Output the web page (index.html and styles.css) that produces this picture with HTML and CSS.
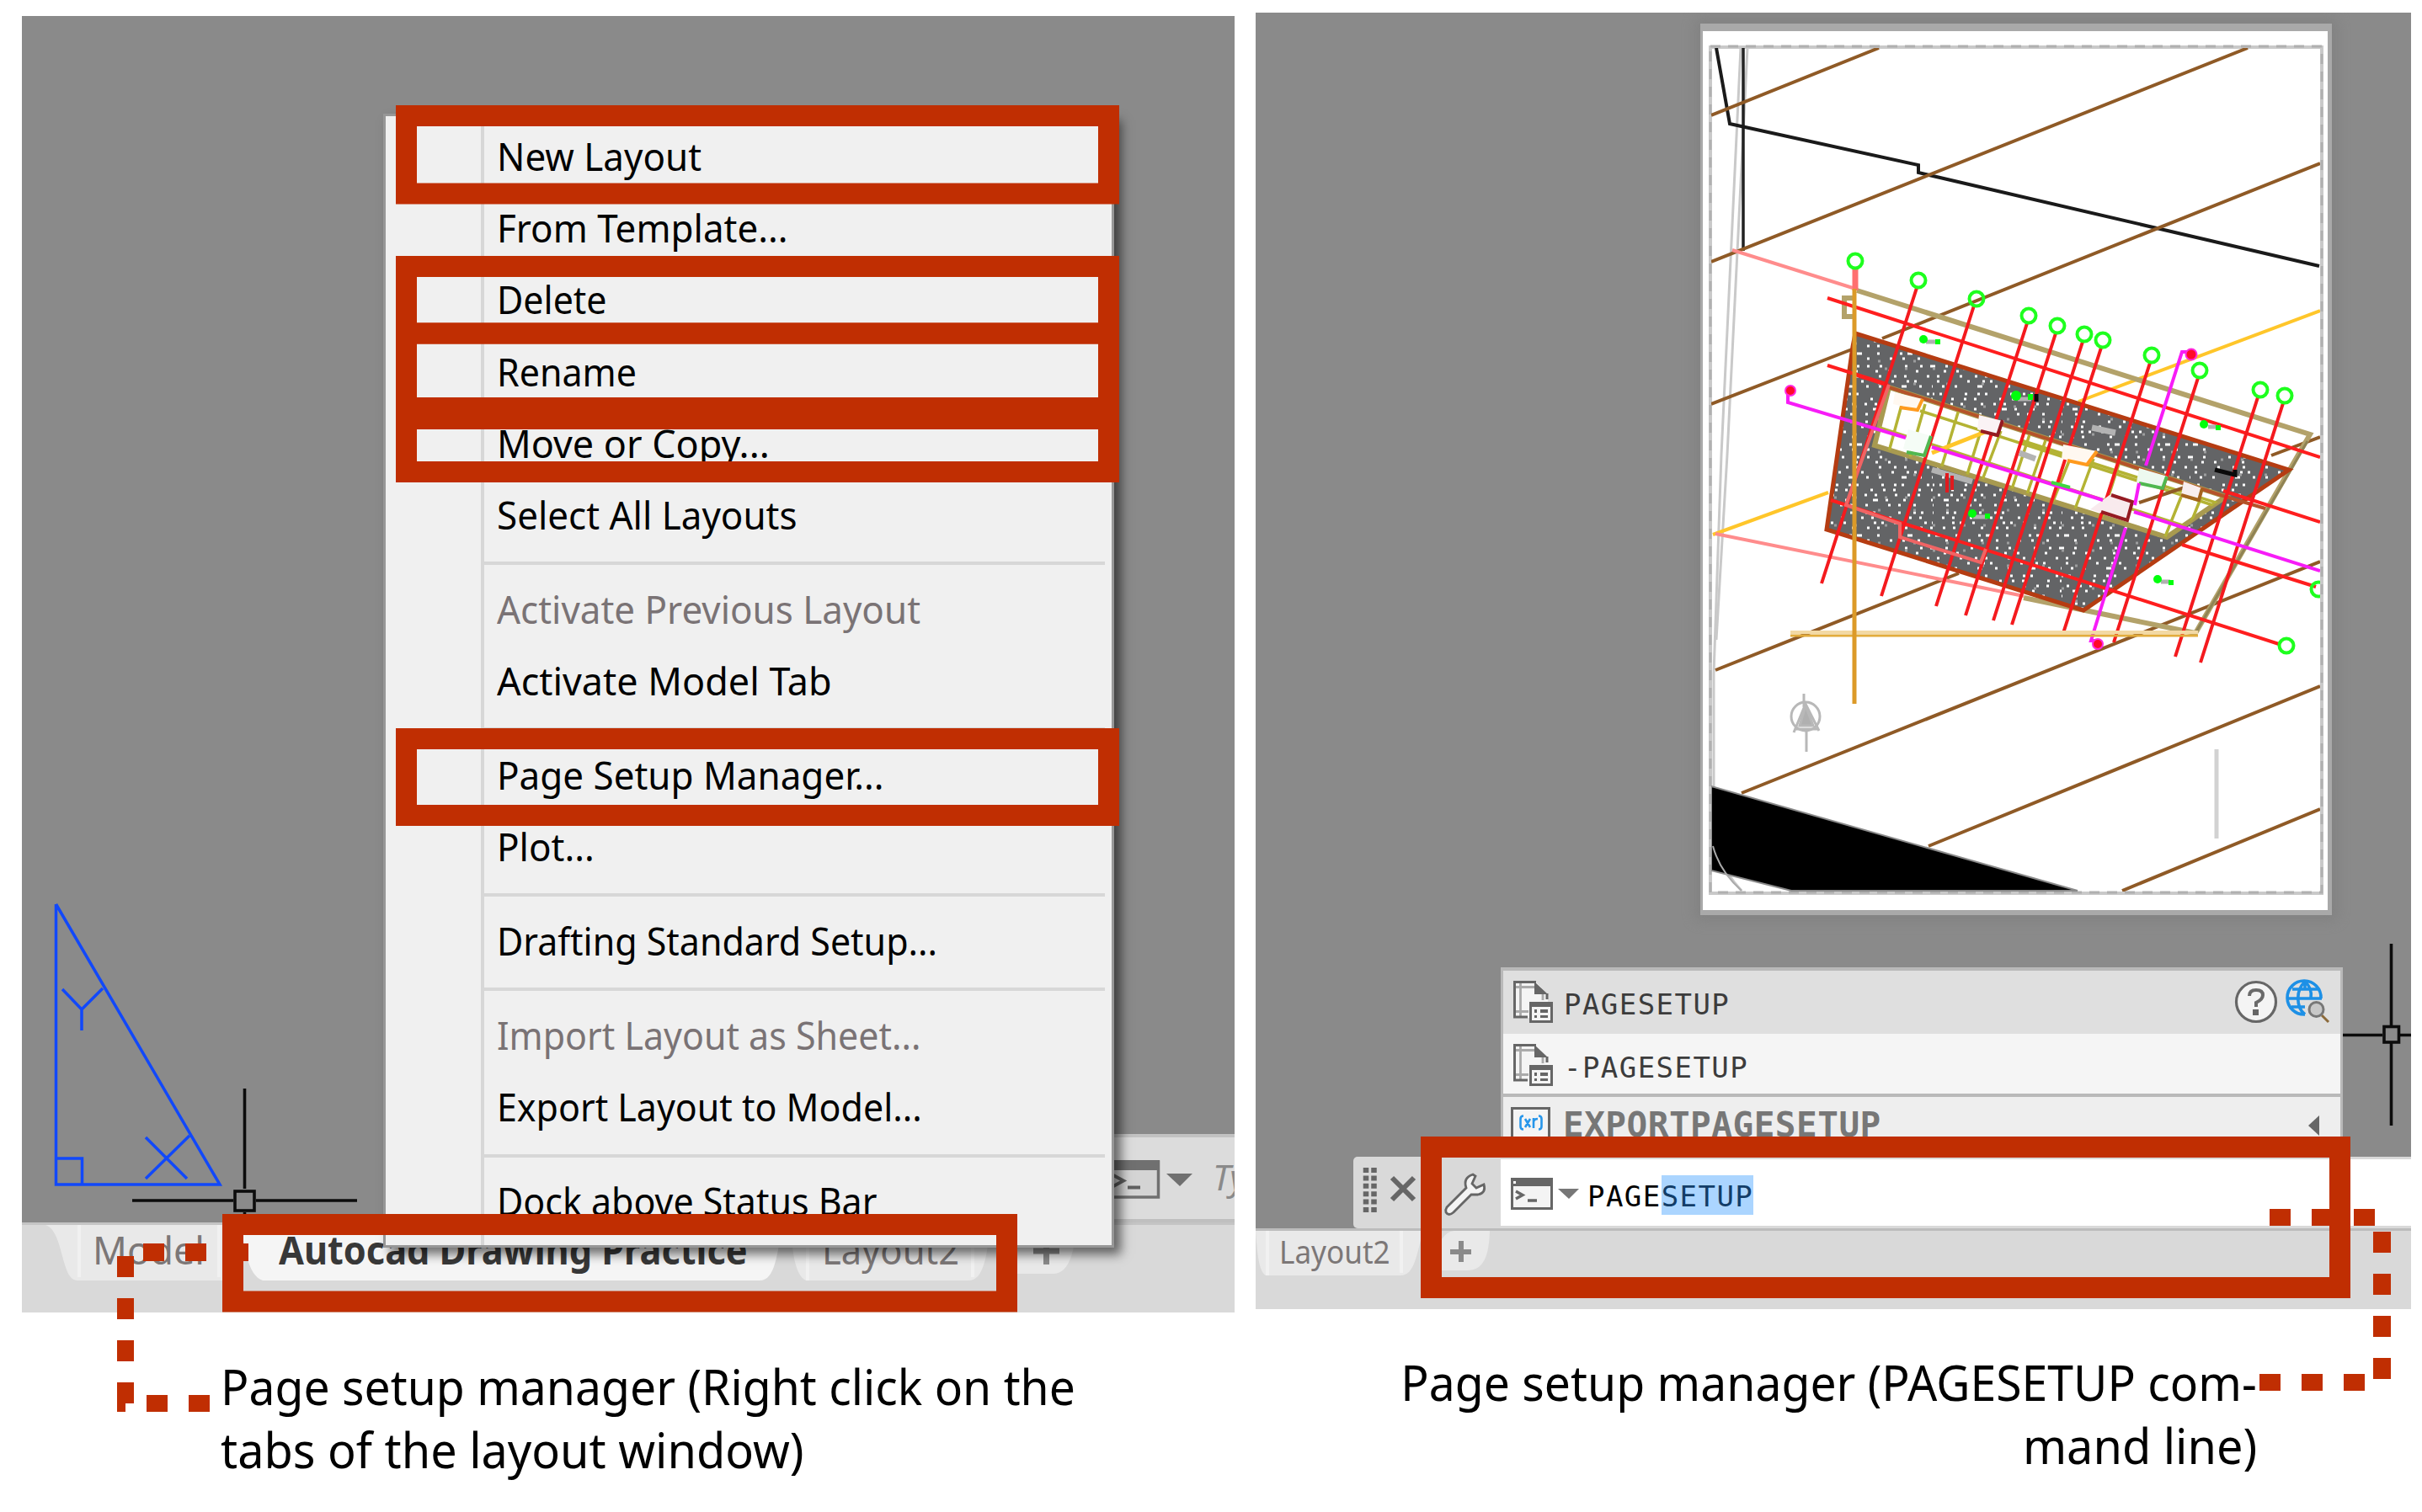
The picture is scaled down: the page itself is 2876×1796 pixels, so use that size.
FILE: index.html
```html
<!DOCTYPE html>
<html lang="en">
<head>
<meta charset="utf-8">
<title>Page setup manager</title>
<link rel="stylesheet" href="styles.css">
</head>
<body>
<main class="sheet">
  <figure class="figure figure-left">
    <div class="panel">
      <div class="canvas canvas-left">
        <svg class="layer" width="1440" height="1433" viewBox="26 19 1440 1433">
          <g class="ucs">
            <path d="M66.5 1074V1407H261L66.5 1074M66.5 1376H97.5V1407"/>
            <path d="M74 1175L97 1199L122 1174M97 1199V1224M173 1351L222 1400M173 1400L225 1349"/>
          </g>
          <g class="cross"><path d="M290.500 1293V1412M290.500 1440V1452M157 1426H277M304 1426H424"/><rect x="279" y="1415" width="23" height="23"/></g>
        </svg>
        <div class="cmd-strip">
          <svg width="143" height="97" viewBox="1323 1351 143 97">
            <rect x="1300" y="1380" width="75.500" height="42" fill="#d4d4d4" stroke="#707070" stroke-width="3.500"/>
            <path d="M1300 1378H1377V1390H1300z" fill="#707070"/>
            <path d="M1322 1396L1334 1402.500L1322 1409M1339 1410.500H1354" fill="none" stroke="#606060" stroke-width="4"/>
            <path d="M1385 1394H1416L1401 1409z" fill="#707070"/>
          </svg>
          <span class="hint">Type a command</span>
        </div>
      </div>
      <div class="tabbar tabbar-left">
        <svg class="layer" width="1440" height="107" viewBox="26 1452 1440 107">
          <path class="tab" d="M54 1455H264V1521H92C72 1521 76 1462 54 1455z"/>
          <path class="tab-edge" d="M94 1455V1517M260 1455V1517"/>
          <path class="tab" d="M939 1455H1176C1172 1492 1168 1521 1150 1521H957C943 1515 940 1480 939 1455z"/>
          <path class="tab-edge" d="M959 1455V1521M1155 1455V1517"/>
          <path class="tab" d="M1190 1455H1279C1275 1492 1268 1513 1250 1513H1190z"/>
          <path class="tab-on" d="M270 1455H930C922 1490 921 1521 902 1521H312C294 1515 290 1480 286 1455z"/>
          <path d="M1227 1486H1258M1242.500 1470V1502" stroke="#8a8a8a" stroke-width="7"/>
        </svg>
        <span class="tab-label l-model">Model</span>
        <span class="tab-label l-active">Autocad Drawing Practice</span>
        <span class="tab-label l-layout">Layout2</span>
      </div>
      <div class="menu">
        <div class="item"><span>New Layout</span></div>
        <div class="item"><span>From Template...</span></div>
        <div class="item snug"><span>Delete</span></div>
        <div class="item snug"><span>Rename</span></div>
        <div class="item wide"><span>Move or Copy...</span></div>
        <div class="item"><span>Select All Layouts</span></div>
        <div class="sep"></div>
        <div class="item off"><span>Activate Previous Layout</span></div>
        <div class="item wide"><span>Activate Model Tab</span></div>
        <div class="sep"></div>
        <div class="item"><span>Page Setup Manager...</span></div>
        <div class="item"><span>Plot...</span></div>
        <div class="sep"></div>
        <div class="item snug"><span>Drafting Standard Setup...</span></div>
        <div class="sep"></div>
        <div class="item snug off"><span>Import Layout as Sheet...</span></div>
        <div class="item snug"><span>Export Layout to Model...</span></div>
        <div class="sep"></div>
        <div class="item snug"><span>Dock above Status Bar</span></div>
      </div>
    </div>
    <figcaption class="caption caption-left"><span>Page setup manager (Right click on the</span><span>tabs of the layout window)</span></figcaption>
  </figure>

  <figure class="figure figure-right">
    <div class="panel">
      <div class="canvas canvas-right">
        <div class="paper"></div>
        <svg class="layer" width="1372" height="1444" viewBox="1491 15 1372 1444">
          <defs>
            <clipPath id="view"><rect x="2032" y="57" width="723" height="1002"/></clipPath>
            <clipPath id="court"><path d="M2243 460L2643 590L2573 638L2226 529z"/></clipPath>
            <pattern id="speck" width="153" height="108" patternUnits="userSpaceOnUse">
              <rect width="153" height="108" fill="#636466"/>
              <g fill="none" stroke="#fff" stroke-width="3">
                <path d="M0 3H153" stroke-dasharray="3 12 3 27 3 15 3 9"/>
                <path d="M0 9H153" stroke-dasharray="3 21 3 12 3 30" stroke-dashoffset="11"/>
                <path d="M0 15H153" stroke-dasharray="3 15 3 9 3 24" stroke-dashoffset="25"/>
                <path d="M0 21H153" stroke-dasharray="3 6 3 33 3 15" stroke-dashoffset="4"/>
                <path d="M0 27H153" stroke-dasharray="3 24 6 15 3 12" stroke-dashoffset="37"/>
                <path d="M0 36H153" stroke-dasharray="3 12 3 6 3 27" stroke-dashoffset="16"/>
                <path d="M0 42H153" stroke-dasharray="3 27 3 12 3 9" stroke-dashoffset="8"/>
                <path d="M0 48H153" stroke-dasharray="3 9 3 21 3 12" stroke-dashoffset="30"/>
                <path d="M0 54H153" stroke-dasharray="3 30 6 9 3 18" stroke-dashoffset="20"/>
                <path d="M0 60H153" stroke-dasharray="3 15 3 24 3 9" stroke-dashoffset="2"/>
                <path d="M0 69H153" stroke-dasharray="3 6 3 27 3 15" stroke-dashoffset="41"/>
                <path d="M0 75H153" stroke-dasharray="3 21 3 9 3 18" stroke-dashoffset="13"/>
                <path d="M0 81H153" stroke-dasharray="3 12 3 33 3 6" stroke-dashoffset="28"/>
                <path d="M0 87H153" stroke-dasharray="3 15 3 9 3 30" stroke-dashoffset="6"/>
                <path d="M0 96H153" stroke-dasharray="3 24 3 6 6 18" stroke-dashoffset="33"/>
                <path d="M0 102H153" stroke-dasharray="3 12 3 15 3 24" stroke-dashoffset="18"/>
              </g>
              <g fill="none" stroke="#9c9d9e" stroke-width="3">
                <path d="M0 6H153M0 51H153M0 84H153" stroke-dasharray="3 33 3 21"/>
                <path d="M0 24H153M0 66H153M0 105H153" stroke-dasharray="3 27 3 39" stroke-dashoffset="14"/>
              </g>
            </pattern>
          </defs>
          <rect x="2031" y="56" width="726" height="1005" class="vp-edge"/>
          <rect x="2031" y="55" width="726" height="1005" class="vp-dash"/>
          <g clip-path="url(#view)" fill="none">
            <g stroke="#c9c9c9" stroke-width="3"><path d="M2067 57L2044 540L2035 800V1000Q2042 1030 2068 1058"/><path d="M2075 57L2051 540L2038 760"/></g>
            <path d="M2070 57V298" stroke="#222" stroke-width="3.500"/>
            <path d="M2038 57L2054 147L2278 196V205L2754 316" stroke="#1a1a1a" stroke-width="4"/>
            <g stroke="#8f5a26" stroke-width="4">
              <path d="M2032 137L2231 57M2032 311L2669 57M2032 480L2199 415M2235 402L2755 194M2037 796L2326 681M2755 519L2697 541M2068 942L2755 667M2290 1005L2755 815M2520 1058L2755 961"/>
            </g>
            <path d="M2755 369L2468 477M2034 635L2171 585" stroke="#ffc62a" stroke-width="4"/>
            <path d="M2057 297L2200 342M2037 634L2403 708" stroke="#ff8c8c" stroke-width="4"/>
            <path d="M2205 345L2743 516L2607 752L2403 710M2203 354H2190V376H2203" stroke="#b3a26a" stroke-width="6"/>
            <path d="M2740 524L2607 752" stroke="#8f8354" stroke-width="3"/>
            <path d="M2032 934L2467 1058H2127L2032 1034z" fill="#000" stroke="#8a8a8a" stroke-width="2"/>
            <path d="M2034 1005Q2042 1035 2068 1058" stroke="#aaa" stroke-width="2"/>
            <path d="M2203 396L2718 558L2474 725L2169 629L2200 412z" fill="url(#speck)" stroke="#b53c12" stroke-width="5"/>
            <path d="M2243 460L2643 590L2573 638L2226 529z" fill="#fff" stroke="#a89a50" stroke-width="6"/>
            <g clip-path="url(#court)">
              <g stroke="#b4b334" stroke-width="3.500">
                <path d="M2280 488L2640 604M2226 506L2610 630M2400 523L2650 603"/>
                <path d="M2260 474L2242 540M2286 480L2266 550M2328 480L2304 560M2352 512L2334 570M2376 512L2352 575M2412 510L2388 584M2430 520L2406 590M2458 545L2436 600M2486 545L2462 610M2518 545L2494 620M2590 590L2568 645M2614 590L2594 640"/>
              </g>
              <path d="M2294 538L2360 512" stroke="#ffc62a" stroke-width="5"/>
              <path d="M2540 597L2600 577" stroke="#8f5a26" stroke-width="4"/>
            </g>
            <path d="M2243 460L2643 590L2690 604" stroke="#b5532a" stroke-width="4"/>
            <path d="M2170 354L2755 543M2170 434L2240 456M2640 583L2755 620M2174 594L2706 765M2591 647L2750 697M2203 445L2243 458" stroke="#ff1e1e" stroke-width="4"/>
            <path d="M2276 342L2163 693M2344 363L2234 708M2407 384L2299 720M2441 396L2334 731M2473 406L2367 737M2495 413L2389 742M2553 431L2450 752M2610 449L2510 763M2681 472L2583 780M2711 479L2613 787" stroke="#f41a1e" stroke-width="4"/>
            <path d="M2243 457L2206 560L2192 600L2256 622L2256 638L2352 668L2358 652" stroke="#f06464" stroke-width="4"/>
            <g stroke-width="4">
              <path d="M2250 466L2283 474L2277 487L2248 480z" fill="#fff8f0"/><path d="M2283 474L2277 487L2256 484" stroke="#ff9a1e"/>
              <path d="M2266 510L2294 518L2285 541L2260 533z" fill="#f5fcf6"/><path d="M2293 518L2285 541L2264 537" stroke="#50b850"/>
              <path d="M2350 493L2378 500L2372 518L2348 510z" fill="#faf3f5"/><path d="M2378 499L2372 517L2352 512" stroke="#951b22"/>
              <path d="M2450 528L2490 536L2478 552L2448 545z" fill="#fff8f0"/><path d="M2490 536L2478 552L2455 547" stroke="#ff9a1e"/>
              <path d="M2540 556L2574 566L2568 580L2537 573z" fill="#edf9ef"/><path d="M2573 566L2568 580L2540 574" stroke="#50b850"/>
              <path d="M2505 588L2533 597L2526 619L2482 605z" fill="#f8eaed"/><path d="M2507 588L2532 596L2526 618L2495 608" stroke="#951b22"/>
              <path d="M2593 572L2615 580L2611 594L2590 588z" fill="#f8eeee"/><path d="M2615 580L2611 594L2590 588" stroke="#a5641e"/>
            </g>
            <path d="M2294 558L2342 572M2398 538L2417 545M2484 508L2512 514" stroke="#b3b3b3" stroke-width="7"/>
            <path d="M2630 558L2654 564V558M2418 468V477" stroke="#0a0a0a" stroke-width="5"/>
            <path d="M2312 562V585M2318 565V582" stroke="#e01a1e" stroke-width="4"/>
            <path d="M2123 464V478L2263 520M2294 531L2497 594M2534 608L2755 678M2603 418H2591L2548 553M2540 574L2535 600M2524 627L2483 761H2490" stroke="#f71cf7" stroke-width="4"/>
            <g fill="#ff0a28" stroke="#ff28e0" stroke-width="2"><circle cx="2126" cy="464" r="6"/><circle cx="2602" cy="421" r="6.500"/><circle cx="2491" cy="765" r="6"/></g>
            <path d="M2203 319V345" stroke="#ff7070" stroke-width="7"/>
            <path d="M2126 751H2610" stroke="#f3d9a4" stroke-width="4"/><path d="M2126 755H2610" stroke="#e2ac3c" stroke-width="3"/>
            <path d="M2202 343V836" stroke="#dc9a28" stroke-width="5"/>
            <g stroke="#1eff1e" stroke-width="4">
              <circle cx="2203" cy="310" r="8.500"/><circle cx="2278" cy="333" r="8.500"/><circle cx="2347" cy="355" r="8.500"/><circle cx="2409" cy="375" r="8.500"/><circle cx="2443" cy="387" r="8.500"/><circle cx="2475" cy="397" r="8.500"/><circle cx="2497" cy="404" r="8.500"/><circle cx="2555" cy="422" r="8.500"/><circle cx="2612" cy="440" r="8.500"/><circle cx="2684" cy="463" r="8.500"/><circle cx="2713" cy="470" r="8.500"/><circle cx="2715" cy="767" r="8.500"/><circle cx="2753" cy="700" r="8.500"/>
            </g>
            <g>
              <path d="M2287 406H2300M2396 474H2412M2622 507H2633M2343 614H2360M2566 691H2577" stroke="#b0b0b0" stroke-width="5"/>
              <g fill="#00ff0c"><circle cx="2284" cy="403" r="5"/><rect x="2298" y="403" width="6" height="6"/><circle cx="2394" cy="470" r="6"/><rect x="2408" y="468" width="6" height="7"/><circle cx="2617" cy="504" r="5"/><rect x="2631" y="505" width="6" height="6"/><circle cx="2342" cy="610" r="5"/><rect x="2357" y="610" width="6" height="6"/><circle cx="2562" cy="688" r="5"/><rect x="2575" y="689" width="6" height="6"/></g>
              <path d="M2436 573L2458 579" stroke="#3fd840" stroke-width="4"/>
            </g>
            <g stroke="#b8b8b8" stroke-width="3"><circle cx="2144" cy="851" r="17"/><path d="M2142 824V840M2145 866V893M2130 870L2144 836L2160 868M2131 866H2160"/><path d="M2137 862L2144 838L2153 862z" fill="#b0b0b0"/></g>
            <path d="M2632 890V996" stroke="#d2d2d2" stroke-width="5"/>
          </g>
          <g class="cross"><path d="M2839.500 1121V1218M2839.500 1239V1337M2782 1229.500H2829M2850 1229.500H2863"/><rect x="2831" y="1219.500" width="17.500" height="18.500"/></g>
        </svg>

        <div class="popup">
          <div class="row row-hot">
            <svg class="ico" width="48" height="52" viewBox="0 0 48 52"><use href="#pageicon"/></svg>
            <span class="mono">PAGESETUP</span>
            <svg class="help" width="116" height="56" viewBox="2652 1162 116 56">
              <circle cx="2679" cy="1190" r="23.500" fill="#f4f4f4" stroke="#666" stroke-width="3.200"/>
              <path d="M2671 1183Q2671 1176 2679 1176Q2687 1176 2687 1182Q2687 1187 2679 1191V1196" fill="none" stroke="#6a6a6a" stroke-width="4"/><rect x="2675" y="1199" width="7" height="7" fill="#666"/>
              <g fill="none" stroke="#1d90e6" stroke-width="3.600"><path d="M2756 1186A20 20 0 1 0 2737 1205M2717 1186H2757M2722 1175H2752M2721 1196H2737M2737 1166V1176M2737 1166C2726 1176 2726 1196 2737 1205M2737 1166C2744 1172 2745 1180 2744 1186"/></g>
              <path d="M2757 1206L2765 1214" stroke="#8b6a3a" stroke-width="3"/><circle cx="2750.500" cy="1199" r="8.500" fill="#c8c8c8" stroke="#777" stroke-width="3"/>
            </svg>
          </div>
          <div class="row row-two">
            <svg class="ico" width="48" height="52" viewBox="0 0 48 52"><use href="#pageicon"/></svg>
            <span class="mono">-PAGESETUP</span>
          </div>
          <div class="row row-three">
            <svg class="ico ico-var" width="48" height="48" viewBox="0 0 48 48"><rect x="1.500" y="1.500" width="44" height="44" fill="#f4f4f4" stroke="#666" stroke-width="3"/><path d="M15 10.500Q11.500 10.500 11.500 14V23Q11.500 26.500 15 26.500M33 10.500Q36.500 10.500 36.500 14V23Q36.500 26.500 33 26.500M17 14L23 24M23 14L17 24M27 25V13M27 17Q28 14 32 14" fill="none" stroke="#2796ea" stroke-width="2.600"/></svg>
            <span class="mono mono-bold">EXPORTPAGESETUP</span>
            <svg class="more" width="14" height="26" viewBox="0 0 14 26"><path d="M13 1V25L0 13z" fill="#666"/></svg>
          </div>
        </div>

        <div class="cmdline">
          <svg class="tools" width="175" height="85" viewBox="1607 1374 175 85">
            <path d="M1622 1387V1441M1631.500 1387V1441" stroke="#666" stroke-width="6.500" stroke-dasharray="6 3.400"/>
            <path d="M1653 1399L1679 1425M1679 1399L1653 1425" stroke="#666" stroke-width="6"/>
            <path d="M1718 1434L1741 1411Q1737 1399 1749 1395L1752 1397L1748 1406L1753 1411L1762 1407Q1765 1417 1755 1419L1747 1419L1726 1440Q1720 1445 1717 1440Q1716 1437 1718 1434z" fill="#f4f4f4" stroke="#666" stroke-width="2.800"/>
          </svg>
          <div class="field">
            <svg class="prompt" width="86" height="40" viewBox="0 0 86 40"><rect x="1.500" y="1.500" width="47" height="35" fill="#f4f4f4" stroke="#666" stroke-width="3"/><rect width="50" height="10" fill="#666"/><rect x="3" y="4" width="3" height="3" fill="#fff"/><path d="M6 16L14 20.500L6 25M20 27H31" fill="none" stroke="#666" stroke-width="3.400"/><path d="M56 13H81L69 25z" fill="#777"/></svg>
            <span class="mono typed">PAGE<mark>SETUP</mark></span>
          </div>
        </div>
      </div>
      <div class="tabbar tabbar-right">
        <svg class="layer" width="1372" height="96" viewBox="1491 1459 1372 96">
          <path class="tab" d="M1491 1462H1690C1682 1490 1680 1515 1663 1515H1503C1495 1510 1493 1490 1491 1462z"/>
          <path class="tab-edge" d="M1505 1462V1515M1664 1462V1512"/>
          <path class="tab" d="M1712 1472Q1718 1463 1726 1462H1769C1768 1492 1762 1509 1742 1509H1712z"/>
          <path d="M1722 1487H1747M1735 1474V1499" stroke="#8a8a8a" stroke-width="6"/>
        </svg>
        <span class="tab-label l-right">Layout2</span>
      </div>
    </div>
    <figcaption class="caption caption-right"><span>Page setup manager (PAGESETUP com-</span><span>mand line)</span></figcaption>
  </figure>

  <svg class="marks" width="2876" height="1796" viewBox="0 0 2876 1796">
    <defs>
      <g id="pageicon">
        <path d="M1.500 1.500H27L41 16V25H19V44H1.500z" fill="#f4f4f4"/>
        <path d="M8.500 2V43M2 7.500H26M2 36.500H18M35 14V23" fill="none" stroke="#aaa" stroke-width="2.800"/>
        <path d="M17 43H1.500V1.500H27M40 15V22" fill="none" stroke="#666" stroke-width="3"/>
        <path d="M25 1L41 16H25z" fill="#666"/>
        <rect x="20.500" y="27" width="25" height="21.500" fill="#f4f4f4" stroke="#666" stroke-width="3"/>
        <path d="M19 25H47V31H19zM25 34H28V38H25zM32 34H41V38H32zM25 41H28V44H25zM32 41H41V44H32z" fill="#666"/>
      </g>
    </defs>
    <g fill="none" stroke="#c02e02" stroke-width="25">
      <path d="M482.500 137.500H1316.500V230H482.500z"/>
      <path d="M482.500 316.500H1316.500V396H482.500z"/>
      <path d="M482.500 396H1316.500V484.500H482.500z"/>
      <path d="M482.500 497.500H1316.500V560.500H482.500z"/>
      <path d="M482.500 877.500H1316.500V968.500H482.500z"/>
      <path d="M276.500 1454.500H1195.500V1546H276.500z"/>
      <path d="M1699.500 1362.500H2778.500V1529.500H1699.500z"/>
    </g>
    <g fill="#c02e02">
      <path d="M170 1477h25v21h-25zM220 1477h25v21h-25zM270 1477h25v21h-25z"/>
      <path d="M139 1492h20v25h-20zM139 1542h20v25h-20zM139 1592h20v25h-20zM139 1642h20v25h-10v10h-10zM174 1657h25v20h-25zM224 1657h25v20h-25z"/>
      <path d="M2695 1436h25v20h-25zM2745 1436h25v20h-25zM2795 1436h25v20h-25z"/>
      <path d="M2818 1463h21v25h-21zM2818 1513h21v25h-21zM2818 1563h21v25h-21zM2818 1613h21v25h-21zM2683 1632h25v20h-25zM2733 1632h25v20h-25zM2783 1632h25v20h-25z"/>
    </g>
  </svg>
</main>
</body>
</html>
```
FILE: styles.css
```css
* { box-sizing: border-box; }
body { margin: 0; background: #fff; font-family: "Noto Sans", "Open Sans", sans-serif; }
.sheet { position: relative; display: flex; gap: 25px; width: 2876px; height: 1796px; padding-left: 26px; overflow: hidden; }
.figure { margin: 0; }
.figure-left { width: 1440px; padding-top: 19px; }
.figure-right { width: 1372px; padding-top: 15px; }
.panel { position: relative; height: 1540px; }
.canvas { position: relative; background: #8a8a8a; overflow: hidden; display: flex; flex-direction: column; justify-content: flex-end; }
.canvas-left { height: 1433px; align-items: flex-end; }
.canvas-right { height: 1444px; align-items: flex-end; }
.layer { position: absolute; left: 0; top: 0; }
.marks { position: absolute; left: 0; top: 0; }

.ucs { fill: none; stroke: #1148fa; stroke-width: 3.5; }
.cross { fill: none; stroke: #0c0c0c; stroke-width: 3.6; }

.cmd-strip { position: relative; display: flex; width: 150px; height: 105px; padding-left: 7px; background: #dcdcdc; border-top: 4px solid #c2c2c2; border-bottom: 4px solid #bfbfbf; overflow: hidden; }
.hint { position: absolute; left: 124px; top: 18px; font-size: 42px; line-height: 57px; font-style: italic; color: #8a8a8a; white-space: nowrap; }

.tabbar { position: relative; background: #d9d9d9; overflow: hidden; }
.tabbar-left { height: 107px; border-top: 3px solid #c4c4c4; }
.tabbar-left .layer { top: -3px; }
.tabbar-right { height: 96px; border-top: 3px solid #bcbcbc; }
.tabbar-right .layer { top: -3px; }
.tab { fill: #e9e9e9; }
.tab-on { fill: #f5f5f5; }
.tab-edge { fill: none; stroke: #f1f1f1; stroke-width: 4; }
.tab-label { position: absolute; white-space: nowrap; color: #7c7777; font-size: 46px; line-height: 60px; top: -1px; transform-origin: 0 0; }
.l-model { left: 84px; transform: scaleX(.98); }
.l-active { left: 305px; color: #383838; font-weight: 700; transform: scaleX(.94); }
.l-layout { left: 950px; transform: scaleX(.945); }
.l-right { left: 28px; top: -6px; font-size: 39px; transform: scaleX(.9); }

.menu { position: absolute; left: 429px; top: 116px; width: 868px; height: 1347px; padding-top: 5px; background: linear-gradient(90deg, #f0f0f0 113px, #d7d7d7 113px, #d7d7d7 117px, #f0f0f0 117px); border: 3px solid #979797; box-shadow: 8px 8px 12px rgba(0, 0, 0, .55); }
.item { height: 85.2px; padding-left: 132px; font-size: 45px; line-height: 85.2px; color: #000; white-space: nowrap; }
.item span { display: inline-block; transform: scaleX(.977); transform-origin: 0 50%; }
.item.snug span { transform: scaleX(.954); }
.item.wide span { transform: scaleX(.998); }
.item.off { color: #7a7375; }
.sep { height: 26.8px; margin: 0 8px 0 116px; padding-top: 13px; }
.sep::before { content: ""; display: block; height: 4px; background: #d7d7d7; }

.caption { font-size: 59px; line-height: 75px; color: #000; white-space: nowrap; display: flex; flex-direction: column; }
.caption span { transform: scaleX(.937); }
.caption span + span { transform: scaleX(.946); }
.caption-left { padding: 50px 0 0 236px; align-items: flex-start; }
.caption-left span { transform-origin: 0 50%; }
.caption-right { padding: 49px 183px 0 0; align-items: flex-end; }
.caption-right span { transform-origin: 100% 50%; }

.paper { position: absolute; left: 528px; top: 13px; width: 750px; height: 1059px; background: #fff; border: solid #a9a9a9; border-width: 9px 5px 6px 3px; box-shadow: 0 0 14px 6px #828282; }
.vp-edge { fill: none; stroke: #c9c9c9; stroke-width: 4; }
.vp-dash { fill: none; stroke: #b0b0b0; stroke-width: 3; stroke-dasharray: 12 9; }

.popup { width: 1000px; height: 206px; margin-right: 81px; background: #eee; border: solid #b9b9b9; border-width: 4px 3px 0; }
.row { display: flex; align-items: flex-start; padding-left: 12px; }
.row-hot { height: 75px; padding-top: 12px; background: #dfdfdf; }
.row-two { height: 71px; padding-top: 12px; background: #f5f5f5; }
.row-three { height: 60px; padding: 12px 24px 0 9px; border-top: 4px solid #b9b9b9; }
.ico { flex: none; margin-right: 12px; }
.ico-var { margin-right: 14px; }
.mono { font-family: "DejaVu Sans Mono", monospace; font-size: 34px; letter-spacing: 1.45px; line-height: 57px; color: #3c3c3c; white-space: nowrap; }
.mono-bold { font-weight: 700; font-size: 41px; letter-spacing: .5px; line-height: 42px; color: #777; }
.help { margin: -3px 11px 0 auto; }
.more { margin: 9px 0 0 auto; }

.cmdline { display: flex; width: 1256px; height: 85px; margin-top: 19px; background: #d9d9d9; border-radius: 5px 0 0 5px; }
.tools { flex: none; }
.field { flex: 1; height: 79px; margin-top: 3px; padding: 22px 0 0 12px; background: #fff; display: flex; align-items: flex-start; }
.prompt { flex: none; margin-right: 5px; }
.typed { color: #000; line-height: 50px; margin-top: -3px; }
.typed mark { display: inline-block; height: 47px; background: #abd5ff; color: #123d68; }
```
